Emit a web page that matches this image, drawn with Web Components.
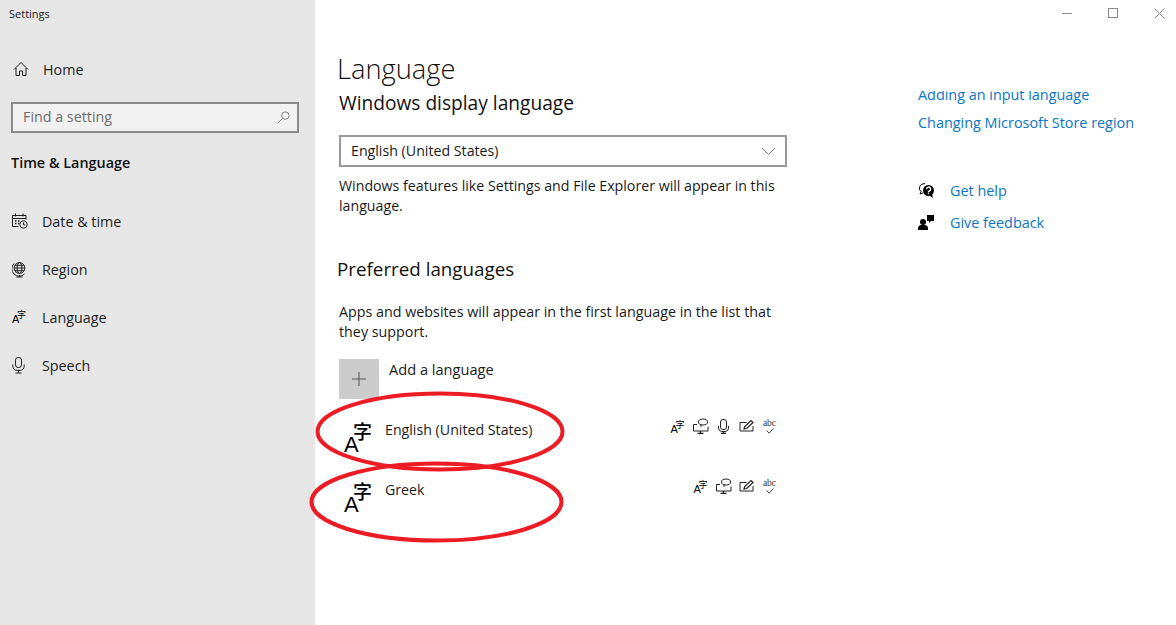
<!DOCTYPE html>
<html>
<head>
<meta charset="utf-8">
<title>Settings</title>
<style>
  html, body {margin: 0; height: 100%; background: #fff; overflow: hidden;}
  body {font-family: "Open Sans", "Noto Sans CJK SC", sans-serif; font-size: 14.2px; color: #1a1a1a;}
</style>
</head>
<body>
<settings-window>
  <settings-nav slot="nav"></settings-nav>
  <language-page slot="page"></language-page>
  <related-links slot="side"></related-links>
</settings-window>

<script>
// Icons are kept in one table so rows can ask for them by name.
const ICONS = {
  home: `<path d="M1 8.5 8 1.5l7 7M3 7v7.5h3.5V10h3v4.5H13V7"/>`,
  date: `<path d="M.5 2.5h13.5v4M.5 2.5v11h6M3.5 .5v3M11 .5v3M.5 5.5h13.5" /><path d="M3 8h1.5M6 8h1.5M3 10.5h1.5M6 10.5h1.5" stroke-width="1.4"/><circle cx="11.5" cy="11.5" r="3.7"/><path d="M11.5 9.5v2.3h1.8"/>`,
  region: `<circle cx="7.5" cy="7" r="5.4"/><ellipse cx="7.5" cy="7" rx="2.4" ry="5.4"/><path d="M2 7h11M3 4.3h9M3 9.7h9M2 2.5a7.4 7.4 0 0 0 10.5 10.5M7.5 14v1.5M4.5 16h6"/>`,
  speech: `<rect x="3.5" y=".5" width="6" height="10" rx="2.6"/><path d="M.8 7.5v1.7a4.2 4.2 0 0 0 4.2 4.2h3a4.2 4.2 0 0 0 4.2-4.2V7.5M6.5 13.5v2M3.5 16h6"/>`,
  search: `<circle cx="10" cy="6" r="4"/><path d="M7.2 8.8 2 14"/>`,
  display: `<path d="M4 6.5H.5v6.5h14.5V8.500"/><path d="M7.5 13v2M4.500 15.500h6" stroke-width="1.300"/><ellipse cx="10" cy="4" rx="4.500" ry="3"/><path d="M8 6.500v2.500"/>`,
  mic: `<rect x="4.5" y="1.5" width="6" height="10" rx="2.5"/><path d="M2.5 8v2a3.5 3.5 0 0 0 3.5 3.5h3a3.5 3.5 0 0 0 3.5-3.5V8"/><path d="M7.5 13.5V15M5 15.5h5" stroke-width="1.3"/>`,
  pen: `<path d="M7.5 4.5H1v8.5h13V8"/><path d="M5 11l.7-2.5L12 2.5l2 2-6.3 6z" stroke-width="1.2"/>`,
  plus: `<path d="M8 1v14M1 8h14"/>`,
  chevron: `<path d="M1 1l6.5 6.5L14 1"/>`,
  min: `<path d="M0 .5h10"/>`,
  max: `<rect x=".5" y=".5" width="9" height="9"/>`,
  close: `<path d="M.5.5l10 10M10.5.5l-10 10"/>`,
};

function icon(name, w, h, vw, vh, stroke) {
  return `<svg width="${w}" height="${h}" viewBox="0 0 ${vw} ${vh}" fill="none"
    stroke="${stroke || "currentColor"}" stroke-width="1">${ICONS[name]}</svg>`;
}

// The A + character mark used for languages. Size comes from the attribute.
class LangMark extends HTMLElement {
  constructor() {
    super();
    const big = this.hasAttribute("big");
    this.attachShadow({mode: "open"}).innerHTML = `
      <style>
        :host {display: inline-block; position: relative; color: #000;
          width: ${big ? 28 : 14}px; height: ${big ? 32 : 15}px;}
        span {position: absolute; display: block;}
        .a {left: 0; bottom: 0; font: ${big ? 22 : 11}px/1 "Liberation Sans", sans-serif;}
        .z {right: 0; top: 0; font: ${big ? "500 19px/14px" : "9px/9px"} "Noto Sans CJK SC", sans-serif;}
      </style>
      <span class="a">A</span><span class="z">字</span>`;
  }
}
customElements.define("lang-mark", LangMark);

class NavItem extends HTMLElement {
  constructor() {
    super();
    this.attachShadow({mode: "open"}).innerHTML = `
      <style>
        :host {display: flex; align-items: center; height: 48px; padding-left: 12px; color: #1f1f1f;}
        .ic {width: 30px; display: flex; align-items: center;}
        ::slotted(lang-mark) {display: block;}
      </style>
      <div class="ic"><slot name="icon"></slot></div>
      <slot></slot>`;
  }
}
customElements.define("nav-item", NavItem);

class SearchBox extends HTMLElement {
  constructor() {
    super();
    this.attachShadow({mode: "open"}).innerHTML = `
      <style>
        :host {display: flex; align-items: center; justify-content: space-between; box-sizing: border-box;
          height: 31px; margin: 0 16px 0 11px; padding: 0 7px 2px 10px;
          background: #f1f1f1; border: 2px solid #8a8a8a; color: #6d6d6d;}
        svg {display: block;}
      </style>
      <span>Find a setting</span>
      ${icon("search", 14, 14, 15, 15, "#777")}`;
  }
}
customElements.define("search-box", SearchBox);

class SettingsNav extends HTMLElement {
  constructor() {
    super();
    this.attachShadow({mode: "open"}).innerHTML = `
      <style>
        :host {display: block; height: 100%; background: #e6e6e6; font-size: 14.3px;}
        .title {height: 45px; padding: 6px 0 0 9px; box-sizing: border-box; font-size: 11px; line-height: 16px;}
        .home {margin-bottom: 9px; margin-left: 1px;}
        .home span[slot] {margin-right: -1px;}
        h2 {margin: 20px 0 24px 11px; font-size: 14.4px; line-height: 20px; font-weight: 600; color: #111;}
        svg {display: block;}
      </style>
      <div class="title">Settings</div>
      <nav-item class="home"><span slot="icon">${icon("home", 16, 16, 16, 16)}</span>Home</nav-item>
      <search-box></search-box>
      <h2>Time &amp; Language</h2>
      <nav-item><span slot="icon">${icon("date", 16, 16, 16, 16)}</span>Date &amp; time</nav-item>
      <nav-item><span slot="icon">${icon("region", 16, 17, 16, 17)}</span>Region</nav-item>
      <nav-item><lang-mark slot="icon"></lang-mark>Language</nav-item>
      <nav-item><span slot="icon">${icon("speech", 14, 17, 14, 17)}</span>Speech</nav-item>`;
  }
}
customElements.define("settings-nav", SettingsNav);

class LangSelect extends HTMLElement {
  constructor() {
    super();
    this.attachShadow({mode: "open"}).innerHTML = `
      <style>
        :host {display: flex; align-items: center; justify-content: space-between; box-sizing: border-box;
          height: 32px; padding: 0 9px 2px 10px; border: 2px solid #999; background: #fff;}
        svg {display: block; color: #777; margin-top: 2px;}
      </style>
      <slot></slot>
      ${icon("chevron", 15, 9, 15, 9)}`;
  }
}
customElements.define("lang-select", LangSelect);

// One installed language: the big mark, its name, and the feature icons.
class LangRow extends HTMLElement {
  constructor() {
    super();
    const features = (this.getAttribute("features") || "").split(" ").map(f => {
      if (f === "lang") return `<div><lang-mark></lang-mark></div>`;
      if (f === "abc") return `<div class="abc"><b>abc</b><svg width="10" height="7" viewBox="0 0 10 7" fill="none" stroke="#222"><path d="M1 3l3 3 5-5.5"/></svg></div>`;
      return `<div>${icon(f, 16, 16, 16, 16)}</div>`;
    }).join("");
    this.attachShadow({mode: "open"}).innerHTML = `
      <style>
        :host {display: flex; height: 60px; box-sizing: border-box; margin-left: 5px;}
        lang-mark[big] {margin-top: 24px; margin-right: 13px; flex: none;}
        .name {flex: 1; line-height: 20px; padding-top: 20px;}
        .features {display: flex; height: 16px; margin-top: 18px; margin-right: 6px; color: #222;}
        .features div {width: 23px; display: flex; justify-content: center;}
        .features lang-mark {margin-top: 2px;}
        .features svg {display: block;}
        .features .abc {flex-direction: column; align-items: center;}
        .abc b {font: 400 9.5px/8px "Liberation Serif", serif; color: #333; margin-top: 1px;}
        .abc svg {margin-top: 1px;}
      </style>
      <lang-mark big></lang-mark>
      <div class="name"><slot></slot></div>
      <div class="features">${features}</div>`;
  }
}
customElements.define("lang-row", LangRow);

class LanguagePage extends HTMLElement {
  constructor() {
    super();
    this.attachShadow({mode: "open"}).innerHTML = `
      <style>
        :host {display: block; width: 448px; margin-top: -1px;}
        h1 {margin: 0 0 0 -2px; height: 40px; font-size: 27.3px; line-height: 40px; font-weight: 300; color: #111;}
        h2 {margin: 0; font-size: 19.15px; font-weight: 400; line-height: 28px; color: #111;}
        p {margin: 0; line-height: 20px;}
        lang-select {margin-top: 18px;}
        .note {margin-top: 9px;}
        .pref {margin: 39px 0 0 -2px; font-size: 18.8px;}
        .apps {margin-top: 19px; font-size: 14.3px;}
        .add {display: flex; margin-top: 17px; height: 40px;}
        .add i {display: flex; align-items: center; justify-content: center; width: 40px; height: 40px; background: #cccccc; color: #555;}
        .add span {margin-left: 10px; line-height: 20px; font-size: 14.6px;}
        svg {display: block;}
        .rows {margin-top: 1px;}
      </style>
      <h1>Language</h1>
      <h2>Windows display language</h2>
      <lang-select>English (United States)</lang-select>
      <p class="note">Windows features like Settings and File Explorer will appear in this language.</p>
      <h2 class="pref">Preferred languages</h2>
      <p class="apps">Apps and websites will appear in the first language in the list that they support.</p>
      <div class="add"><i>${icon("plus", 16, 16, 16, 16)}</i><span>Add a language</span></div>
      <div class="rows">
        <lang-row features="lang display mic pen abc">English (United States)</lang-row>
        <lang-row features="lang display pen abc">Greek</lang-row>
      </div>`;
  }
}
customElements.define("language-page", LanguagePage);

class RelatedLinks extends HTMLElement {
  constructor() {
    super();
    this.attachShadow({mode: "open"}).innerHTML = `
      <style>
        :host {display: block; color: #0a74c8; font-size: 14.4px;}
        .clip {height: 42px; overflow: hidden; position: relative;}
        .clip div {position: absolute; left: 0; line-height: 20px; white-space: nowrap;}
        .help {display: flex; flex-direction: column; margin-top: 41px;}
        .help div {display: flex; align-items: center; height: 32px;}
        svg {display: block; margin-right: 15px; color: #000;}
      </style>
      <div class="clip">
        <div style="top:-6px">Adding an input language</div>
        <div style="top:22px">Changing Microsoft Store region</div>
      </div>
      <div class="help">
        <div><svg width="17" height="17" viewBox="0 0 17 17"><path fill="none" stroke="#000" d="M7 1.5a5.5 4.8 0 0 0-4 8.2L2 12l3-1"/><circle cx="10.5" cy="8.5" r="5.5" fill="#000"/><path d="M12 14l3 2-1-4z" fill="#000"/><path fill="none" stroke="#fff" stroke-width="1.4" d="M8.6 7.2a2 2 0 1 1 2.8 1.7l-.9.8v.8M10.5 11.2v1"/></svg>Get help</div>
        <div><svg width="17" height="17" viewBox="0 0 17 17" fill="#000"><path d="M9 1h7v6h-3l-2 2V7H9z"/><circle cx="5" cy="8" r="3"/><path d="M0 16v-1.5A3.5 3.5 0 0 1 3.5 11h3a3.5 3.5 0 0 1 3.5 3.5V16z"/></svg>Give feedback</div>
      </div>`;
  }
}
customElements.define("related-links", RelatedLinks);

class SettingsWindow extends HTMLElement {
  constructor() {
    super();
    this.attachShadow({mode: "open"}).innerHTML = `
      <style>
        :host {display: grid; grid-template-columns: 315px 24px 448px 131px 1fr; grid-template-rows: 50px 1fr;
          height: 625px; position: relative;}
        .nav {grid-column: 1; grid-row: 1 / 3;}
        .page {grid-column: 3; grid-row: 2;}
        .side {grid-column: 5; grid-row: 2; padding-top: 41px;}
        .controls {position: absolute; top: 0; right: 0; display: flex; color: #888;}
        .controls div {width: 46px; height: 26px; display: flex; align-items: center; justify-content: center;}
        .controls div:last-child {width: 34px; margin-left: 6px;}
        .controls svg {display: block;}
        .marks {position: absolute; left: 0; top: 0; pointer-events: none;}
      </style>
      <div class="nav"><slot name="nav"></slot></div>
      <div class="page"><slot name="page"></slot></div>
      <div class="side"><slot name="side"></slot></div>
      <div class="controls">
        <div>${icon("min", 10, 1, 10, 1)}</div>
        <div>${icon("max", 10, 10, 10, 10)}</div>
        <div>${icon("close", 11, 11, 11, 11)}</div>
      </div>
      <svg class="marks" width="1176" height="625" fill="none" stroke="#ed1c24" stroke-width="4">
        <ellipse cx="440" cy="431.5" rx="122.5" ry="38"/>
        <ellipse cx="436.5" cy="502" rx="125" ry="38.5"/>
      </svg>`;
  }
}
customElements.define("settings-window", SettingsWindow);
</script>
</body>
</html>
